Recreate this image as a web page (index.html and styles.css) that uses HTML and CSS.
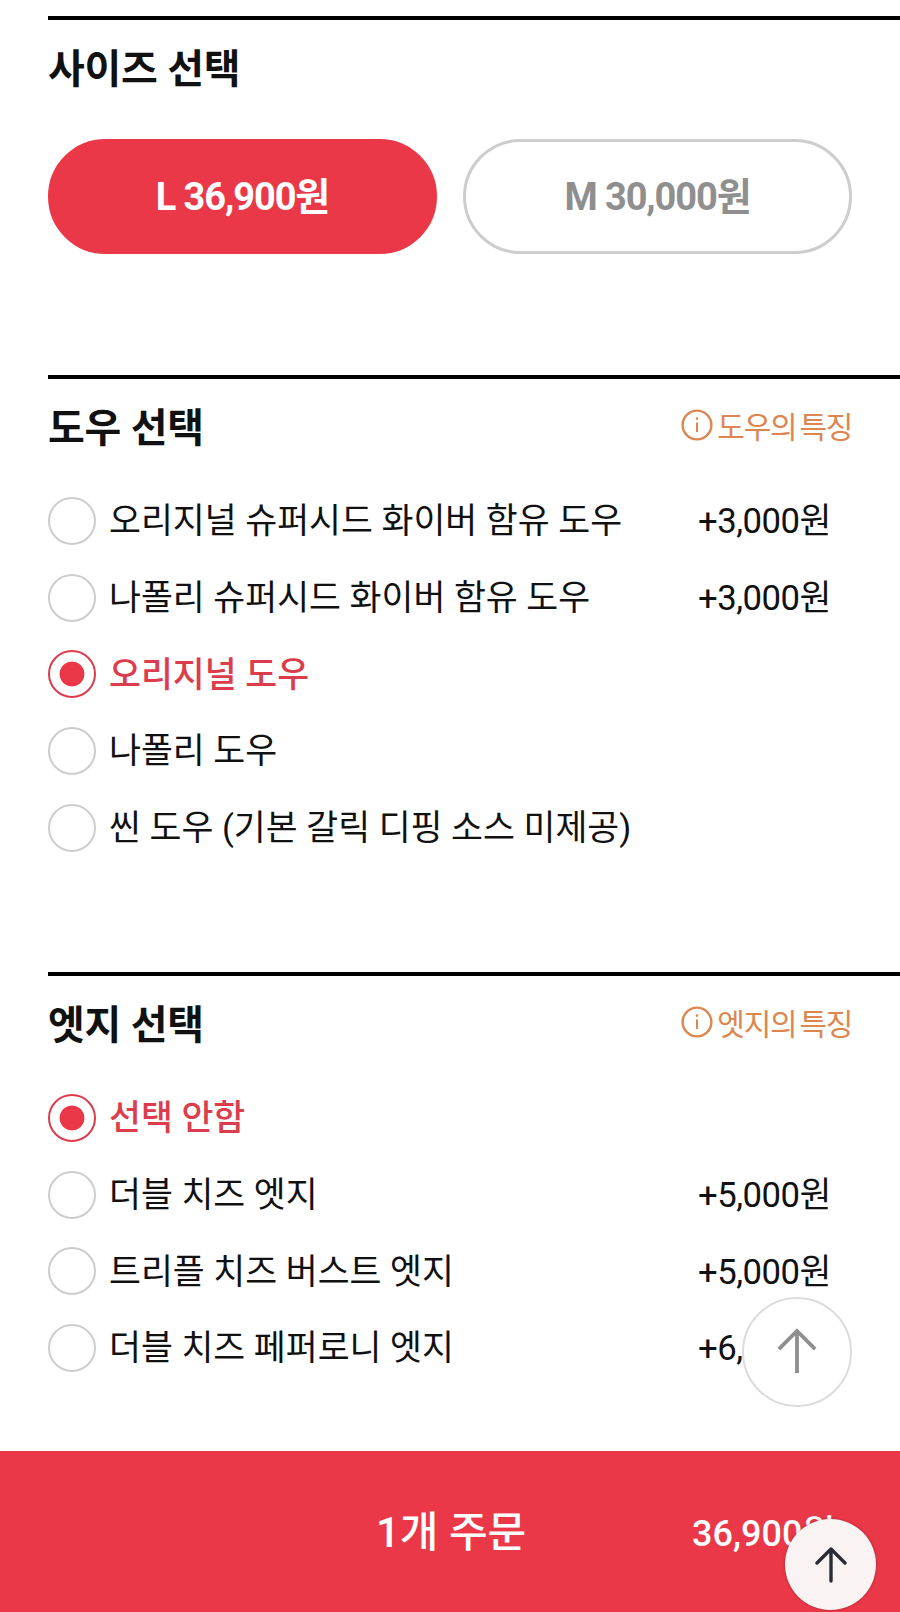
FILE: index.html
```html
<!DOCTYPE html>
<html lang="ko">
<head>
<meta charset="utf-8">
<title>옵션 선택</title>
<link rel="stylesheet" href="styles.css">
</head>
<body>
<main class="content">
  <section class="group group-size">
    <div class="group-head"><h2>사이즈 선택</h2></div>
    <div class="sizes">
      <button class="size size-on"><span class="size-text">L 36,900원</span></button>
      <button class="size"><span class="size-text">M 30,000원</span></button>
    </div>
  </section>
  <section class="group group-dough">
    <div class="group-head">
      <h2>도우 선택</h2>
      <a class="info"><svg class="info-icon" viewBox="0 0 32 32"><circle cx="16" cy="16" r="14.4" fill="none" stroke="#dc8650" stroke-width="2.4"/><path d="M16 13.5V23" stroke="#dc8650" stroke-width="2" fill="none"/><circle cx="16" cy="9.6" r="1.3" fill="#dc8650"/></svg>도우의 특징</a>
    </div>
    <ul class="options">
      <li class="option"><span class="radio"></span><span class="label">오리지널 슈퍼시드 화이버 함유 도우</span><span class="price">+3,000원</span></li>
      <li class="option"><span class="radio"></span><span class="label">나폴리 슈퍼시드 화이버 함유 도우</span><span class="price">+3,000원</span></li>
      <li class="option option-on"><span class="radio"></span><span class="label">오리지널 도우</span></li>
      <li class="option"><span class="radio"></span><span class="label">나폴리 도우</span></li>
      <li class="option"><span class="radio"></span><span class="label">씬 도우 (기본 갈릭 디핑 소스 미제공)</span></li>
    </ul>
  </section>
  <section class="group group-edge">
    <div class="group-head">
      <h2>엣지 선택</h2>
      <a class="info"><svg class="info-icon" viewBox="0 0 32 32"><circle cx="16" cy="16" r="14.4" fill="none" stroke="#dc8650" stroke-width="2.4"/><path d="M16 13.5V23" stroke="#dc8650" stroke-width="2" fill="none"/><circle cx="16" cy="9.6" r="1.3" fill="#dc8650"/></svg>엣지의 특징</a>
    </div>
    <ul class="options">
      <li class="option option-on"><span class="radio"></span><span class="label">선택 안함</span></li>
      <li class="option"><span class="radio"></span><span class="label">더블 치즈 엣지</span><span class="price">+5,000원</span></li>
      <li class="option"><span class="radio"></span><span class="label">트리플 치즈 버스트 엣지</span><span class="price">+5,000원</span></li>
      <li class="option"><span class="radio"></span><span class="label">더블 치즈 페퍼로니 엣지</span><span class="price">+6,000원</span></li>
    </ul>
  </section>
</main>
<button class="top-light" aria-label="위로"><svg viewBox="0 0 44 50" class="top-light-icon"><path d="M22 47V3M3 22L22 3L41 22" fill="none" stroke="#8f8f8f" stroke-width="4"/></svg></button>
<footer class="order">
  <span class="order-label">1개 주문</span>
  <span class="order-price">36,900원</span>
</footer>
<button class="top-dark" aria-label="위로"><svg viewBox="0 0 32 38" class="top-dark-icon"><path d="M16 35V3M2 17L16 3L30 17" fill="none" stroke="#2b2b33" stroke-width="3.4" stroke-linecap="round" stroke-linejoin="round"/></svg></button>
</body>
</html>
```
FILE: styles.css
```css
* { box-sizing: border-box; }
html, body { margin: 0; padding: 0; }
body {
  width: 900px;
  height: 1612px;
  position: relative;
  overflow: hidden;
  background: #fff;
  color: #111;
  font-family: Roboto, "Noto Sans CJK KR", sans-serif;
}
.content { padding: 16px 0 0 48px; }
.group { border-top: 4px solid #000; padding-right: 48px; }
.group-size { height: 359px; }
.group-dough { height: 597px; }
.group-edge { height: 470px; }
.group-head {
  display: flex;
  justify-content: space-between;
  align-items: center;
  height: 56px;
  margin-top: 18px;
}
h2 { margin: 0; font-size: 40px; font-weight: 700; letter-spacing: -0.3px; }
.sizes { display: flex; gap: 26px; margin-top: 45px; }
.size {
  flex: 1;
  height: 115px;
  border-radius: 58px;
  border: 3px solid #cdcdcd;
  background: #fff;
  color: #8f8f8f;
  font: 700 38px Roboto, "Noto Sans CJK KR", sans-serif;
  letter-spacing: -1.1px;
  padding: 0;
}
.size-text { position: relative; top: -3px; }
.size-on { background: #eb3848; border-color: #eb3848; color: #fff; }
.info {
  display: flex;
  align-items: center;
  gap: 4px;
  color: #dc8650;
  font-size: 30px;
  letter-spacing: -1.3px;
  word-spacing: -3px;
}
.info-icon { width: 32px; height: 32px; }
.options { list-style: none; margin: 27px 0 0; padding: 0; }
.option { display: flex; align-items: center; height: 76.7px; font-size: 34.7px; }
.radio {
  width: 48px;
  height: 48px;
  border-radius: 50%;
  border: 2.5px solid #cdcdcd;
  margin-top: 5px;
  margin-right: 13px;
  flex: none;
  background: #fff;
}
.label { flex: 1; white-space: nowrap; }
.price { width: 134px; margin-right: 20px; white-space: nowrap; letter-spacing: -0.5px; }
.option-on { color: #dc3d4c; font-weight: 500; }
.option-on .radio {
  border-color: #dc3d4c;
  background: radial-gradient(circle, #eb3848 0 12px, transparent 12.8px);
}
.top-light {
  position: absolute;
  left: 742px;
  top: 1297px;
  width: 110px;
  height: 110px;
  border-radius: 50%;
  background: #fff;
  border: 2.5px solid #dcdcdc;
  padding: 0;
  display: flex;
  align-items: center;
  justify-content: center;
}
.top-light-icon { width: 42px; height: 48px; }
.order {
  position: absolute;
  left: 0;
  right: 0;
  top: 1451px;
  height: 161px;
  background: #eb3848;
  color: #fff;
  font-size: 42px;
  font-weight: 500;
  display: flex;
  align-items: center;
}
.order-label { margin-left: 376px; width: 316px; position: relative; top: -3px; }
.order-price { font-size: 36px; font-weight: 500; position: relative; top: -2px; }
.top-dark {
  position: absolute;
  left: 785px;
  top: 1519px;
  width: 91px;
  height: 91px;
  border-radius: 50%;
  border: 0;
  background: #f9f4f3;
  box-shadow: 0 0 3px rgba(0,0,0,.35);
  padding: 0;
  display: flex;
  align-items: center;
  justify-content: center;
}
.top-dark-icon { width: 32px; height: 38px; }
```
